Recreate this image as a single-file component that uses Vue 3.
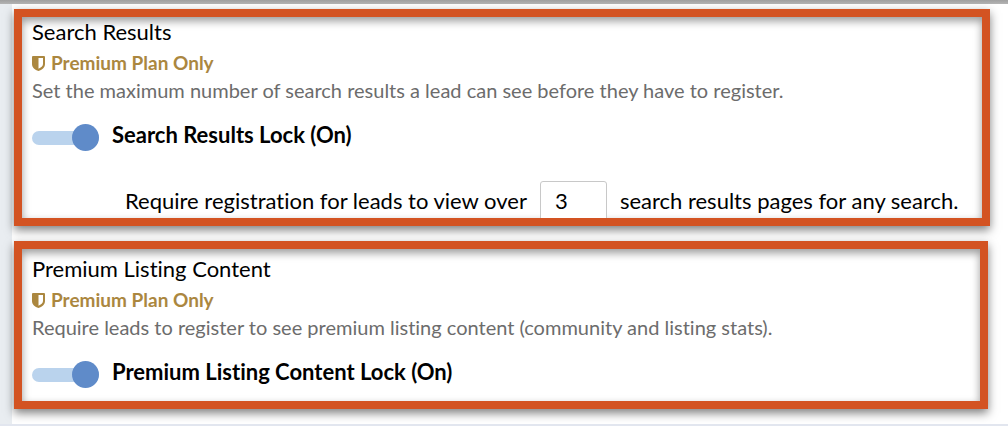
<template>
  <main class="page">
    <section
      v-for="section in sections"
      :key="section.id"
      class="card"
      :class="section.id"
    >
      <h2 class="title">{{ section.title }}</h2>
      <p class="plan">
        <svg class="shield" viewBox="0 0 13 15" aria-hidden="true">
          <path
            fill-rule="evenodd"
            d="M1 0h11a1 1 0 0 1 1 1v7c0 3.500-3 6-6.500 7C3 14 0 11.500 0 8V1a1 1 0 0 1 1-1zM6.500 2v10.800C9 11.700 11 10 11 8V2z"
          />
        </svg>
        <span>Premium Plan Only</span>
      </p>
      <p class="description">{{ section.description }}</p>

      <div class="lock">
        <input
          :id="section.id + '-lock'"
          v-model="section.locked"
          class="switch"
          type="checkbox"
          role="switch"
        />
        <label class="lock-label" :for="section.id + '-lock'">
          {{ section.lockName }} ({{ section.locked ? 'On' : 'Off' }})
        </label>
      </div>

      <div v-if="section.id === 'search'" class="limit">
        <label for="page-limit">Require registration for leads to view over</label>
        <input id="page-limit" v-model="pageLimit" class="limit-input" type="text" />
        <span>search results pages for any search.</span>
      </div>
    </section>
  </main>
</template>

<script setup>
import { ref } from 'vue';

const pageLimit = ref('3');

const sections = ref([
  {
    id: 'search',
    title: 'Search Results',
    description: 'Set the maximum number of search results a lead can see before they have to register.',
    lockName: 'Search Results Lock',
    locked: true
  },
  {
    id: 'listing',
    title: 'Premium Listing Content',
    description: 'Require leads to register to see premium listing content (community and listing stats).',
    lockName: 'Premium Listing Content Lock',
    locked: true
  }
]);
</script>

<style>
body {
  margin: 0;
  background: #e2e6ef;
}
</style>

<style scoped>
.page {
  box-sizing: border-box;
  display: flex;
  flex-direction: column;
  gap: 15px;
  padding: 9px 18px 15px 14px;
  /* top bar and left gutter */
  background:
    linear-gradient(#a0a0a0, #b4b4b4) top / 100% 4px no-repeat,
    linear-gradient(#e9edf1, #e9edf1) left / 12px 100% no-repeat,
    #fff;
  color: #000;
  font-family: Lato, "Liberation Sans", sans-serif;
  font-size: 22px;
  font-variant-ligatures: none;
}

.card {
  padding: 0 10px;
  border: 8px solid #d35322;
  box-shadow: 0 4px 9px rgba(0, 0, 0, 0.5), inset 0 4px 9px rgba(0, 0, 0, 0.4);
}

.listing {
  margin-right: 2px;
  padding-top: 5px;
  padding-bottom: 12px;
}

.title,
.plan,
.description {
  margin: 0;
  white-space: nowrap;
}

.title {
  font-size: 22px;
  font-weight: 400;
  line-height: 30px;
}

.plan {
  display: flex;
  align-items: center;
  gap: 6px;
  color: #ab873f;
  font-size: 19px;
  font-weight: 700;
  line-height: 32px;
}

.shield {
  width: 13px;
  height: 15px;
  fill: currentColor;
}

.description {
  color: #6c6c6c;
  font-size: 20px;
  line-height: 22px;
}

.lock {
  display: flex;
  align-items: flex-start;
  gap: 13px;
  height: 30px;
  margin-top: 21px;
}

.switch {
  appearance: none;
  display: grid;
  align-items: center;
  width: 67px;
  height: 27px;
  margin: 2px 0 0;
  cursor: pointer;
}

.switch::before,
.switch::after {
  content: "";
  grid-area: 1 / 1;
}

.switch::before {
  height: 14px;
  border-radius: 7px;
  background: #bad3ed;
}

.switch::after {
  width: 27px;
  height: 27px;
  border-radius: 50%;
  background: #5f8bc9;
}

.switch:checked::after {
  justify-self: end;
}

.lock-label {
  font-weight: 700;
  line-height: 26px;
}

.limit {
  display: flex;
  align-items: flex-start;
  gap: 13px;
  height: 37px;
  margin-top: 29px;
  padding-left: 93px;
  overflow: hidden;
  line-height: 40px;
  white-space: nowrap;
}

.limit-input {
  box-sizing: border-box;
  flex: none;
  width: 67px;
  height: 40px;
  padding: 0 14px;
  border: 1px solid #c8c8c8;
  border-radius: 3px;
  background: #fff;
  color: #000;
  font: inherit;
}
</style>
